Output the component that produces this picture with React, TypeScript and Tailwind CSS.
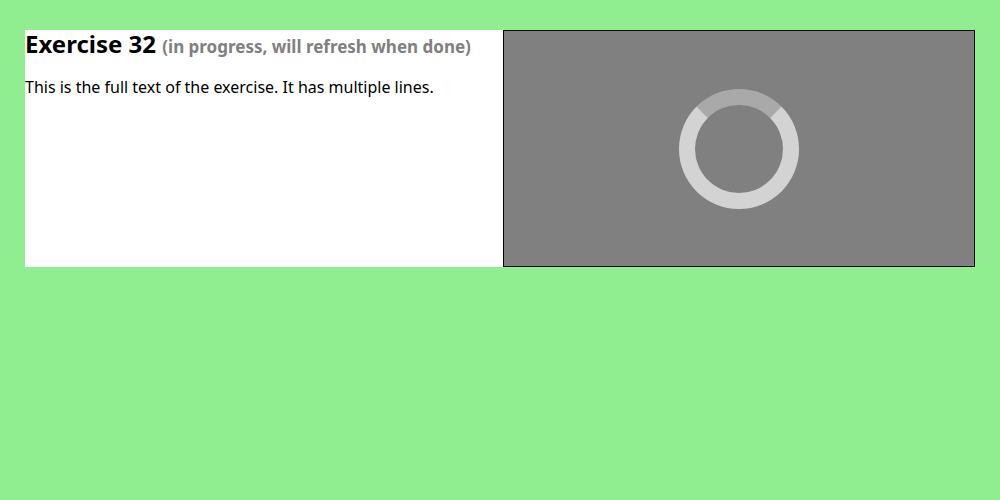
export default function App() {
  return (
    <main className="min-h-screen bg-[#90ee90] px-[25px] py-[30px] font-['Noto_Sans',sans-serif] text-base text-black">
      <article className="flex bg-white">
        <section className="min-w-0 flex-1">
          <h1 className="text-2xl leading-[28px] font-bold">
            Exercise 32{" "}
            <small className="text-[17px] leading-none text-[#808080]">(in progress, will refresh when done)</small>
          </h1>
          <p className="mt-[17px]">This is the full text of the exercise. It has multiple lines.</p>
        </section>
        <div className="flex min-h-[237px] w-[calc(50%-3px)] shrink-0 items-center justify-center border border-black bg-[#808080]">
          <div
            role="status"
            aria-label="Loading"
            className="size-[120px] rounded-full border-16 border-[#d3d3d3] border-t-[#a9a9a9]"
          />
        </div>
      </article>
    </main>
  );
}
